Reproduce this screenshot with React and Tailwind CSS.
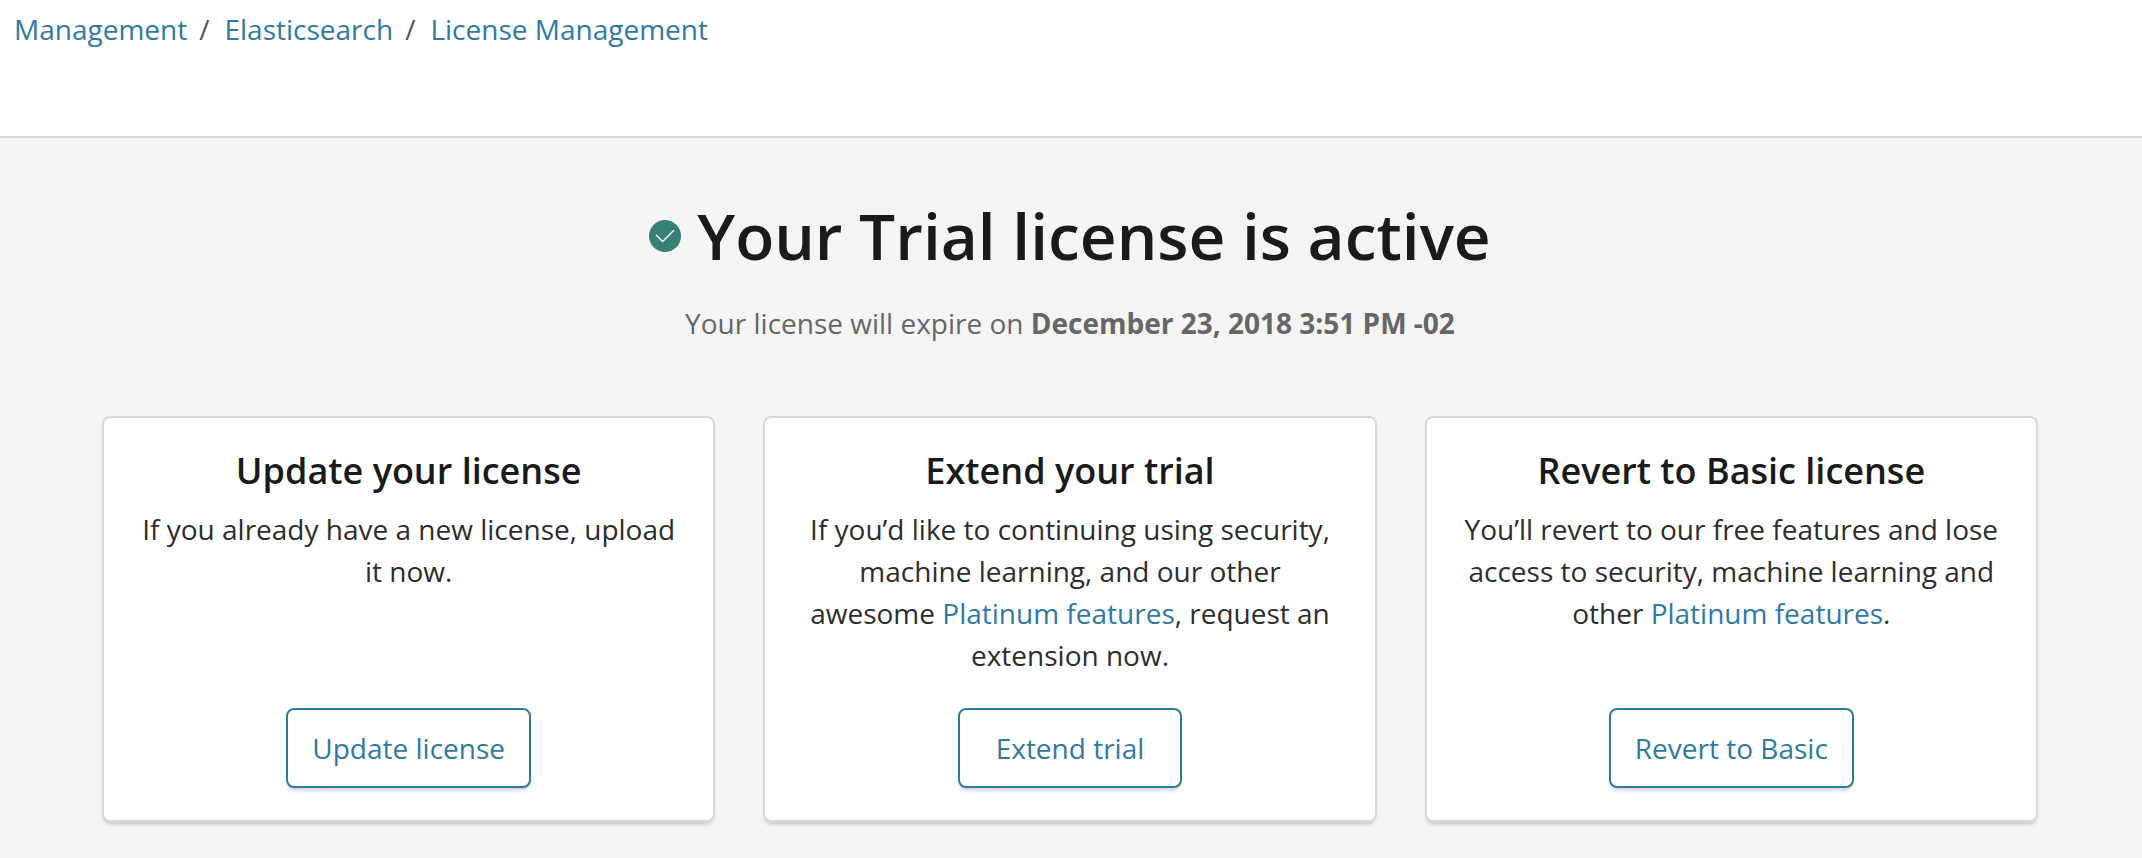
const font = "font-['Open_Sans','Noto_Sans',sans-serif]";

function TextLink({ children }) {
  return <a href="#" className="text-[#3079a3]">{children}</a>;
}

function Separator() {
  return <span className="mr-[3px] text-[#555]">/</span>;
}

function Card({ title, action, children }) {
  return (
    <section className="flex flex-1 basis-0 flex-col items-center rounded-lg border-2 border-[#d9d9d9] bg-white px-8 pt-[30px] pb-8 text-center shadow-[0_4px_4px_-2px_rgba(0,0,0,0.2)]">
      <h2 className="text-[36px] leading-[46px] font-semibold text-[#1a1a1a]">{title}</h2>
      <p className="mt-[14px] grow text-[28px] leading-[42px] text-[#2d2d2d]">{children}</p>
      <button type="button" className="mt-8 h-20 min-w-56 rounded-lg border-2 border-[#3079a3] bg-white px-6 text-[28px] text-[#3079a3] shadow-[0_4px_4px_-2px_rgba(48,91,121,0.3)]">
        {action}
      </button>
    </section>
  );
}

export default function App() {
  return (
    <div className={`flex min-h-screen flex-col bg-white ${font}`}>
      <nav aria-label="Breadcrumb" className="flex h-[138px] items-start gap-3 border-b-2 border-[#d9d9d9] px-[14px] pt-2 text-[28px] leading-[42px]">
        <TextLink>Management</TextLink>
        <Separator />
        <TextLink>Elasticsearch</TextLink>
        <Separator />
        <TextLink>License Management</TextLink>
      </nav>
      <main className="grow bg-[#f5f5f5] pt-[62px] pr-[104px] pb-9 pl-[102px]">
        <header className="flex flex-col items-center">
          <div className="flex items-center gap-4">
            <svg viewBox="0 0 32 32" className="size-8" aria-hidden="true">
              <circle cx="16" cy="16" r="16" fill="#387f76" />
              <path d="M7.3 15.3l6.4 6.2L24.6 10.5" fill="none" stroke="#fff" strokeWidth="1.4" strokeLinecap="round" strokeLinejoin="round" />
            </svg>
            <h1 className="text-[64px] leading-[72px] font-semibold text-[#1a1a1a]">Your Trial license is active</h1>
          </div>
          <p className="mt-[30px] text-[28px] leading-[42px] text-[#666]">
            Your license will expire on <strong className="font-bold">December 23, 2018 3:51 PM -02</strong>
          </p>
        </header>
        <div className="mt-[72px] flex gap-12">
          <Card title="Update your license" action="Update license">
            If you already have a new license, upload it now.
          </Card>
          <Card title="Extend your trial" action="Extend trial">
            If you’d like to continuing using security, machine learning, and our other awesome <TextLink>Platinum features</TextLink>, request an extension now.
          </Card>
          <Card title="Revert to Basic license" action="Revert to Basic">
            You’ll revert to our free features and lose access to security, machine learning and other <TextLink>Platinum features</TextLink>.
          </Card>
        </div>
      </main>
    </div>
  );
}
